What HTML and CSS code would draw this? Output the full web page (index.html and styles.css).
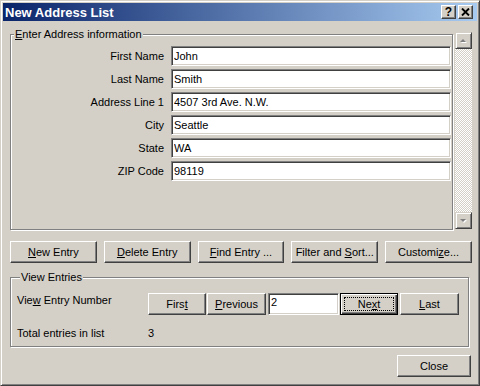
FILE: index.html
```html
<!DOCTYPE html>
<html lang="en">
<head>
    <meta charset="UTF-8">
    <meta name="viewport" content="width=device-width, initial-scale=1.0">
    <title>New Address List</title>
    <link rel="stylesheet" href="styles.css">
</head>
<body>
    <div class="window">
        <div class="titlebar">
            <span class="title">New Address List</span>
            <div class="caption-buttons">
                <button class="cap-btn help">?</button>
                <button class="cap-btn">
                    <svg width="9" height="8" viewBox="0 0 9 8">
                        <path d="M1 0.5 L8 7.5 M8 0.5 L1 7.5" stroke="#000" stroke-width="1.9"/>
                    </svg>
                </button>
            </div>
        </div>

        <div class="dialog-body">
            <!-- address fields with their scrollbar -->
            <div class="entry-panel">
                <fieldset class="group fields-group">
                    <legend><u>E</u>nter Address information</legend>
                    <div class="field-grid">
                        <label for="first">First Name</label>
                        <input class="textbox" id="first" value="John">
                        <label for="last">Last Name</label>
                        <input class="textbox" id="last" value="Smith">
                        <label for="addr1">Address Line 1</label>
                        <input class="textbox" id="addr1" value="4507 3rd Ave. N.W.">
                        <label for="city">City</label>
                        <input class="textbox" id="city" value="Seattle">
                        <label for="state">State</label>
                        <input class="textbox" id="state" value="WA">
                        <label for="zip">ZIP Code</label>
                        <input class="textbox" id="zip" value="98119">
                    </div>
                </fieldset>
                <div class="scrollbar">
                    <div class="scroll-btn">
                        <svg width="9" height="6" viewBox="0 0 9 6">
                            <polygon points="5,2 8,5 2,5" fill="#fff"/>
                            <polygon points="4,1 7,4 1,4" fill="#808080"/>
                        </svg>
                    </div>
                    <div class="scroll-track"></div>
                    <div class="scroll-btn">
                        <svg width="9" height="6" viewBox="0 0 9 6">
                            <polygon points="2,2 8,2 5,5" fill="#fff"/>
                            <polygon points="1,1 7,1 4,4" fill="#808080"/>
                        </svg>
                    </div>
                </div>
            </div>

            <div class="action-row">
                <button class="btn"><u>N</u>ew Entry</button>
                <button class="btn"><u>D</u>elete Entry</button>
                <button class="btn"><u>F</u>ind Entry ...</button>
                <button class="btn">Filter and <u>S</u>ort...</button>
                <button class="btn">Customi<u>z</u>e...</button>
            </div>

            <fieldset class="group view-group">
                <legend>View Entries</legend>
                <div class="view-grid">
                    <span class="view-label">Vie<u>w</u> Entry Number</span>
                    <div class="nav">
                        <button class="btn nav-btn first">Firs<u>t</u></button>
                        <button class="btn nav-btn prev"><u>P</u>revious</button>
                        <input class="textbox entry-number" value="2">
                        <button class="btn nav-btn default">Ne<u>x</u>t</button>
                        <button class="btn nav-btn last"><u>L</u>ast</button>
                    </div>
                    <span>Total entries in list</span>
                    <span>3</span>
                </div>
            </fieldset>

            <div class="footer">
                <button class="btn close-btn">Close</button>
            </div>
        </div>
    </div>
</body>
</html>
```

FILE: styles.css
```css
body {
    margin: 0;
    background: #d4d0c8;
    font-family: "Liberation Sans", Arial, sans-serif;
    font-size: 11px;
    color: #000;
}

.window {
    width: 480px;
    height: 386px;
    box-sizing: border-box;
    background: #d4d0c8;
    border: 1px solid;
    border-color: #d4d0c8 #404040 #404040 #d4d0c8;
    box-shadow: inset 1px 1px #fff, inset -1px -1px #808080;
    padding: 2px;
}

/* title bar */
.titlebar {
    height: 18px;
    display: flex;
    align-items: center;
    justify-content: space-between;
    padding: 0 4px 0 2px;
    background: linear-gradient(90deg, #0a246a, #a6caf0);
}

.title {
    color: #fff;
    font-weight: bold;
    font-size: 13px;
}

.caption-buttons {
    display: flex;
    gap: 2px;
}

.cap-btn {
    width: 15px;
    height: 14px;
    padding: 0;
    margin: 0;
    display: flex;
    align-items: center;
    justify-content: center;
    background: #d4d0c8;
    border: 1px solid;
    border-color: #fff #404040 #404040 #fff;
    box-shadow: inset -1px -1px #808080;
    font-family: "Liberation Sans", Arial, sans-serif;
    font-weight: bold;
    font-size: 12px;
    line-height: 1;
}

/* main area */
.dialog-body {
    padding: 7px 5px 0 7px;
}

.group {
    margin: 0;
    padding: 0;
    box-sizing: border-box;
    border: 1px solid #808080;
    box-shadow: inset 1px 1px #fff, 1px 1px #fff;
    min-width: 0;
}

.group legend {
    margin-left: 3px;
    padding: 0 1px;
    line-height: 13px;
    background: #d4d0c8;
}

.entry-panel {
    display: flex;
    height: 202px;
}

.fields-group {
    width: 443px;
    height: 100%;
    flex: none;
    padding: 5px 1px 0 0;
}

.field-grid {
    display: grid;
    grid-template-columns: 153px 280px;
    column-gap: 7px;
    row-gap: 3px;
    align-items: center;
}

.field-grid label {
    text-align: right;
}

.textbox {
    -webkit-appearance: none;
    appearance: none;
    box-sizing: border-box;
    height: 20px;
    margin: 0;
    padding: 0 2px;
    background: #fff;
    border: 1px solid;
    border-color: #808080 #fff #fff #808080;
    box-shadow: inset 1px 1px #404040, inset -1px -1px #d4d0c8;
    font-family: "Liberation Sans", Arial, sans-serif;
    font-size: 11px;
    color: #000;
    outline: none;
}

.scrollbar {
    width: 17px;
    height: 197px;
    margin: 4px 0 0 2px;
    display: flex;
    flex-direction: column;
}

.scroll-btn {
    height: 17px;
    box-sizing: border-box;
    display: flex;
    align-items: center;
    justify-content: center;
    background: #d4d0c8;
    border: 1px solid;
    border-color: #d4d0c8 #404040 #404040 #d4d0c8;
    box-shadow: inset 1px 1px #fff, inset -1px -1px #808080;
}

.scroll-track {
    flex: 1;
    background: repeating-conic-gradient(#d4d0c8 0 25%, #fff 0 50%) 0 0 / 2px 2px;
}

/* buttons */
.btn {
    box-sizing: border-box;
    height: 22px;
    margin: 0;
    padding: 0;
    background: #d4d0c8;
    border: 1px solid;
    border-color: #fff #404040 #404040 #fff;
    box-shadow: inset -1px -1px #808080;
    font-family: "Liberation Sans", Arial, sans-serif;
    font-size: 11px;
    color: #000;
}

.action-row {
    display: flex;
    gap: 7px;
    margin-top: 11px;
}

.action-row .btn {
    flex: 1;
}

.view-group {
    height: 76px;
    margin: 8px 3px 0 0;
    padding: 9px 0 0 6px;
}

.view-grid {
    display: grid;
    grid-template-columns: 131px 1fr;
    row-gap: 12px;
    align-items: start;
}

.view-label {
    padding-top: 1px;
}

.nav {
    display: flex;
}

.nav-btn.first {
    width: 58px;
}

.nav-btn.prev {
    width: 59px;
    margin-left: 1px;
}

.entry-number {
    width: 71px;
    height: 22px;
    margin-left: 2px;
    padding: 0 2px 4px;
}

.nav-btn.default {
    width: 58px;
    margin-left: 1px;
    border: 1px solid #000;
    box-shadow: inset 1px 1px #fff, inset -1px -1px #404040, inset -2px -2px #808080;
    outline: 1px dotted #000;
    outline-offset: -5px;
}

.nav-btn.last {
    width: 59px;
    margin-left: 2px;
}

.footer {
    display: flex;
    justify-content: flex-end;
    margin: 8px 1px 0 0;
}

.close-btn {
    width: 74px;
}
```
